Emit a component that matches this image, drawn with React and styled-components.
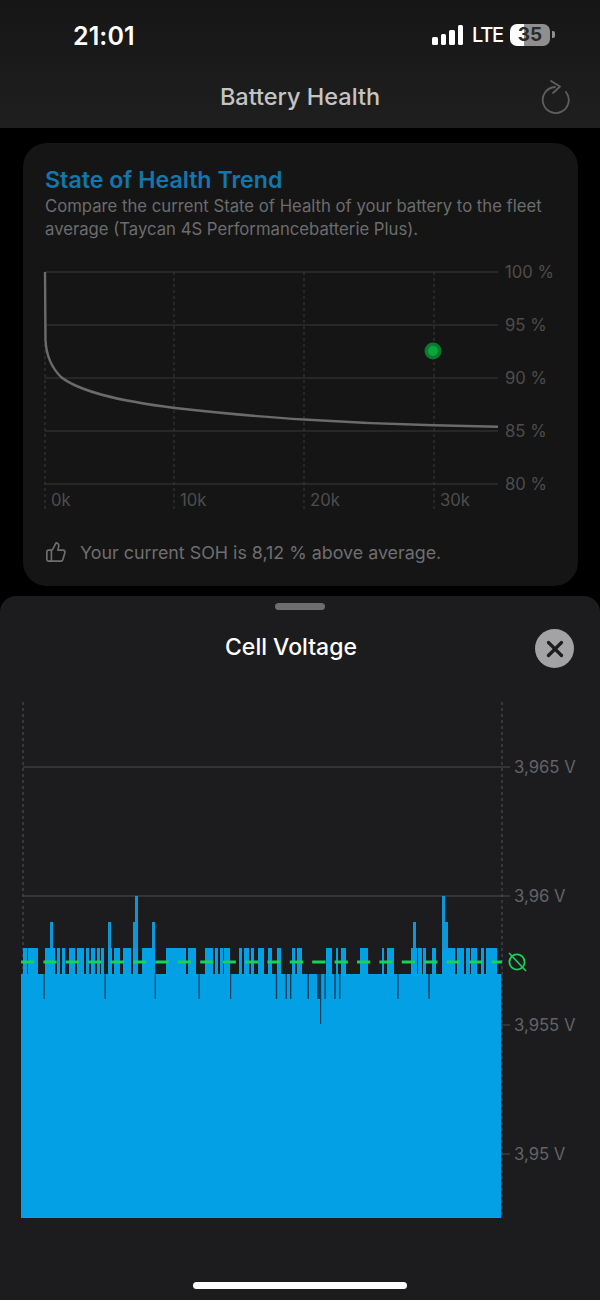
import React from "react";
import styled, { createGlobalStyle } from "styled-components";
import { ThumbsUp, X } from "lucide-react";

const GlobalStyle = createGlobalStyle`
  html, body {
    margin: 0;
    padding: 0;
    background: #000;
  }
  * {
    box-sizing: border-box;
  }
`;

const Page = styled.div`
  width: 600px;
  height: 1300px;
  overflow: hidden;
  display: flex;
  flex-direction: column;
  background: #000;
  font-family: Inter, "Liberation Sans", sans-serif;
`;

const Header = styled.header`
  height: 128px;
  flex: none;
  background: linear-gradient(#161617, #1f1f20);
  padding: 21px 45px 0 73px;
`;

const StatusBar = styled.div`
  display: flex;
  align-items: center;
  justify-content: space-between;
  height: 30px;
`;

const Time = styled.div`
  font-size: 25px;
  font-weight: 600;
  color: #fff;
  letter-spacing: 0.1px;
`;

const StatusIcons = styled.div`
  display: flex;
  align-items: center;
  margin-top: -3px;
`;

const Signal = styled.div`
  display: flex;
  align-items: flex-end;
  gap: 3px;
  height: 20px;
  margin-right: 9px;
`;

const SignalBar = styled.span`
  width: 5.5px;
  height: ${(props) => props.$h}px;
  background: #fff;
  border-radius: 1.5px;
`;

const Lte = styled.div`
  width: 29px;
  font-size: 20px;
  font-weight: 500;
  color: #fff;
  margin-right: 9px;
  letter-spacing: -1.2px;
`;

const Battery = styled.div`
  width: 40px;
  height: 22px;
  border-radius: 7px;
  background: linear-gradient(90deg, #fff 0 36%, #8f8f8f 36% 100%);
  color: #2a2a2a;
  font-size: 19px;
  font-weight: 700;
  line-height: 22px;
  text-align: center;
`;

const BatteryNub = styled.span`
  width: 3px;
  height: 7px;
  margin-left: 2px;
  background: #8f8f8f;
  border-radius: 0 2px 2px 0;
`;

const NavBar = styled.div`
  position: relative;
  margin: 30px -45px 0 -73px;
  display: flex;
  justify-content: center;
`;

const NavTitle = styled.h1`
  margin: 0;
  font-size: 23.5px;
  font-weight: 500;
  color: #c4c4c4;
  line-height: 32px;
`;

const RefreshIcon = styled.svg`
  position: absolute;
  right: 29px;
  top: -2px;
`;

const Card = styled.section`
  margin: 15px 22px 10px 23px;
  height: 443px;
  flex: none;
  padding: 22px 22px 0;
  border-radius: 24px;
  background: #151516;
`;

const CardTitle = styled.h2`
  margin: 0;
  font-size: 23.2px;
  line-height: 30px;
  font-weight: 600;
  color: #1277ac;
`;

const CardText = styled.p`
  margin: 0 0 31px;
  font-size: 16.7px;
  line-height: 23px;
  color: #6c6c6c;
`;

const ChartSvg = styled.svg`
  display: block;
  overflow: visible;
`;

const AxisLabel = styled.text`
  font-size: 16.7px;
  fill: ${(props) => props.$color || "#4d4d4d"};
`;

const Summary = styled.div`
  display: flex;
  align-items: center;
  gap: 13px;
  margin-top: 29px;
  font-size: 17.85px;
  color: #6e6e6e;
`;

const Sheet = styled.section`
  flex: 1;
  position: relative;
  background: #1c1c1e;
  border-radius: 16px 16px 0 0;
  display: flex;
  flex-direction: column;
  align-items: center;
`;

const Handle = styled.div`
  width: 50px;
  height: 7px;
  margin-top: 7px;
  border-radius: 4px;
  background: #6d6d6f;
`;

const SheetHeader = styled.div`
  width: 100%;
  height: 39px;
  margin-top: 19px;
  padding: 0 26px 0 0;
  display: flex;
  align-items: center;
  justify-content: flex-end;
  position: relative;
`;

const SheetTitle = styled.h2`
  position: absolute;
  left: 225px;
  top: 3px;
  margin: 0;
  font-size: 23px;
  line-height: 30px;
  font-weight: 500;
  color: #fff;
`;

const CloseButton = styled.button`
  width: 39px;
  height: 39px;
  padding: 0;
  border: 0;
  border-radius: 50%;
  background: #a3a3a6;
  color: #1c1c1e;
  display: flex;
  align-items: center;
  justify-content: center;
`;

const HomeIndicator = styled.div`
  position: absolute;
  left: 193px;
  bottom: 11px;
  width: 214px;
  height: 7px;
  border-radius: 4px;
  background: #fff;
`;

const VoltageSvg = styled(ChartSvg)`
  margin-top: 34px;
`;

// x ranges sitting at the upper level of the cell voltage bars
const upper = [
  [23, 27], [28, 38], [45, 55], [57, 60], [62, 65], [69, 75], [77, 84], [86, 89],
  [91, 95], [97, 100], [101, 104], [108, 112], [114, 120], [123, 131], [133, 138],
  [142, 155], [166, 186], [188, 196], [205, 213], [215, 218], [220, 223], [224, 230],
  [239, 242], [244, 249], [251, 254], [258, 264], [268, 272], [277, 281], [292, 295],
  [297, 302], [326, 332], [336, 338], [341, 346], [360, 368], [382, 384], [387, 394],
  [411, 417], [418, 422], [423, 426], [432, 436], [442, 455], [457, 464], [466, 470],
  [471, 477], [481, 484], [486, 497],
];

const spikes = [
  [50, 53, 922], [108, 111, 922], [133, 137, 922], [135, 138, 896], [152, 155, 922],
  [413, 416, 922], [442, 445, 896], [445, 448, 922],
];

const notches = [
  [43.5, 1.2, 999], [104.5, 1.2, 999], [154.7, 1.2, 999], [198.5, 1.2, 999], [230, 1.2, 999],
  [275.8, 1.4, 999], [285.5, 1.4, 999], [290, 1.4, 999], [307.5, 1.4, 999],
  [317, 3.5, 999], [320, 1.2, 1024], [324.5, 1.4, 999], [334.3, 1.4, 999],
  [339, 1.4, 999], [397.2, 1.4, 999], [428.3, 1.4, 999],
];

const curve =
  "M45 272 L45.5 340 C46 352 50 366 61 377 C80 392 120 401 175 408 C220 413 260 417 304 419.5 C350 422.5 400 424.5 434 425.3 C460 426 480 426.4 498 426.7";

const HealthChart = () => (
  <ChartSvg width={510} height={240} viewBox="45 272 510 240">
    {[45, 174, 304, 434].map((x) => (
      <line key={x} x1={x} x2={x} y1={272} y2={512} stroke="#3c3c3c" strokeDasharray="3 3" />
    ))}
    {[272, 325, 378, 431, 484].map((y) => (
      <line key={y} x1={45} x2={498} y1={y} y2={y} stroke="#3a3a3a" />
    ))}
    <path d={curve} fill="none" stroke="#6b6b6b" strokeWidth={2.4} />
    <circle cx={433} cy={351} r={8.5} fill="#0b7a30" />
    <circle cx={433} cy={351} r={5} fill="#0aa63b" />
    {[["100 %", 272], ["95 %", 325], ["90 %", 378], ["85 %", 431], ["80 %", 484]].map(([t, y]) => (
      <AxisLabel key={t} x={505} y={y + 6}>{t}</AxisLabel>
    ))}
    {[["0k", 51], ["10k", 180], ["20k", 310], ["30k", 440]].map(([t, x]) => (
      <AxisLabel key={t} x={x} y={506}>{t}</AxisLabel>
    ))}
  </ChartSvg>
);

const VoltageChart = () => (
  <VoltageSvg width={600} height={520} viewBox="0 702 600 520">
    <line x1={23} x2={23} y1={702} y2={1218} stroke="#55555a" strokeDasharray="3 3" />
    <line x1={502} x2={502} y1={702} y2={1218} stroke="#55555a" strokeDasharray="3 3" />
    {[767, 896].map((y) => (
      <line key={y} x1={23} x2={510} y1={y} y2={y} stroke="#4c4c4e" />
    ))}
    {[1025, 1154].map((y) => (
      <line key={y} x1={501} x2={510} y1={y} y2={y} stroke="#4c4c4e" />
    ))}
    <rect x={21} y={974} width={480} height={244} fill="#03a0e5" />
    {upper.map(([a, b]) => (
      <rect key={a} x={a} y={948} width={b - a} height={27} fill="#03a0e5" />
    ))}
    {spikes.map(([a, b, top]) => (
      <rect key={a + "-" + top} x={a} y={top} width={b - a} height={949 - top} fill="#0c97d6" />
    ))}
    {notches.map(([x, w, bottom]) => (
      <rect key={x} x={x} y={974} width={w} height={bottom - 974} fill="#123e5a" />
    ))}
    <line x1={21} x2={502} y1={962} y2={962} stroke="#18d25a" strokeWidth={3} strokeDasharray="13.3 9.1" />
    <circle cx={517} cy={962} r={7.6} fill="none" stroke="#18d25a" strokeWidth={1.8} />
    <line x1={509} x2={526} y1={953} y2={971} stroke="#18d25a" strokeWidth={1.6} />
    {[["3,965 V", 767], ["3,96 V", 896], ["3,955 V", 1025], ["3,95 V", 1154]].map(([t, y]) => (
      <AxisLabel key={t} x={514} y={y + 6} $color="#636366">{t}</AxisLabel>
    ))}
  </VoltageSvg>
);

export default function App() {
  return (
    <Page>
      <GlobalStyle />
      <Header>
        <StatusBar>
          <Time>21:01</Time>
          <StatusIcons>
            <Signal>
              {[8, 11, 15, 20].map((h) => (
                <SignalBar key={h} $h={h} />
              ))}
            </Signal>
            <Lte>LTE</Lte>
            <Battery>35</Battery>
            <BatteryNub />
          </StatusIcons>
        </StatusBar>
        <NavBar>
          <NavTitle>Battery Health</NavTitle>
          <RefreshIcon width={30} height={36} viewBox="0 0 30 36" fill="none" stroke="#5f5f5f" strokeWidth={1.8}>
            <path d="M14 8 A13 13 0 1 0 25 13" strokeLinecap="round" />
            <path d="M10 2 L19 7.5 L12 14" strokeLinecap="round" strokeLinejoin="round" />
          </RefreshIcon>
        </NavBar>
      </Header>
      <Card>
        <CardTitle>State of Health Trend</CardTitle>
        <CardText>
          Compare the current State of Health of your battery to the fleet
          <br />
          average (Taycan 4S Performancebatterie Plus).
        </CardText>
        <HealthChart />
        <Summary>
          <ThumbsUp size={22} color="#6e6e6e" strokeWidth={1.8} />
          Your current SOH is 8,12 % above average.
        </Summary>
      </Card>
      <Sheet>
        <Handle />
        <SheetHeader>
          <SheetTitle>Cell Voltage</SheetTitle>
          <CloseButton aria-label="Close">
            <X size={26} strokeWidth={3} />
          </CloseButton>
        </SheetHeader>
        <VoltageChart />
        <HomeIndicator />
      </Sheet>
    </Page>
  );
}
